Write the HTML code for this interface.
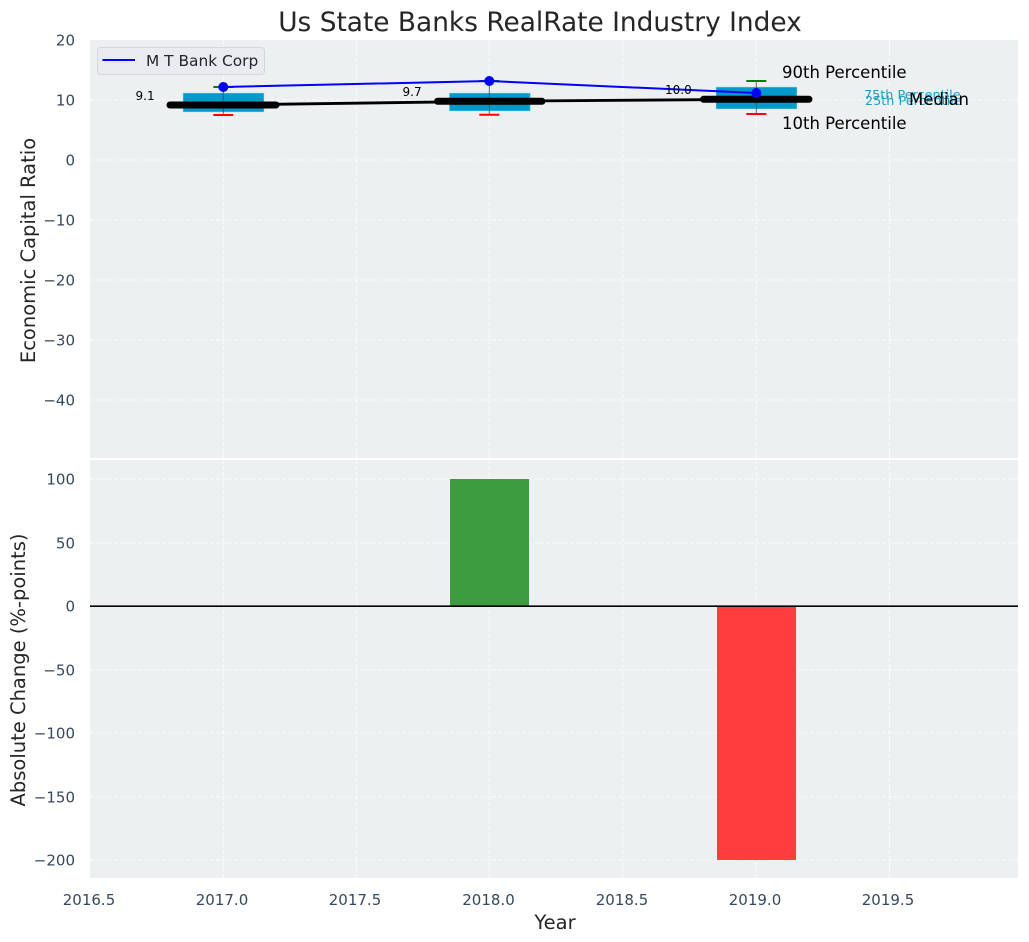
<!DOCTYPE html>
<html><head><meta charset="utf-8"><style>
html,body{margin:0;padding:0;background:#fff;width:1029px;height:942px;overflow:hidden}
svg{display:block}
text{font-family:"DejaVu Sans","Liberation Sans",sans-serif}
.t{font-size:15px;fill:#34495e}
.g{stroke:#fff;stroke-width:1;stroke-dasharray:4 2;opacity:.75;fill:none}
.l{font-size:19.500px;fill:#262626}
.p{font-size:16.500px;fill:#000}
.v{font-size:12px;fill:#000}
</style></head><body>
<svg width="1029" height="942" viewBox="0 0 1029 942" xmlns="http://www.w3.org/2000/svg">
<rect x="90" y="40" width="928" height="418" fill="#ecf0f1"/>
<rect x="90" y="460" width="928" height="418" fill="#ecf0f1"/>
<!-- grid top -->
<path class="g" d="M223.3 40V458M356.5 40V458M489.3 40V458M622.8 40V458M756.3 40V458M889.5 40V458M90 100H1018M90 160H1018M90 220H1018M90 280H1018M90 340H1018M90 400H1018"/>
<!-- grid bottom -->
<path class="g" d="M223.3 460V878M356.5 460V878M489.3 460V878M622.8 460V878M756.3 460V878M889.5 460V878M90 479H1018M90 543H1018M90 606H1018M90 670H1018M90 733H1018M90 797H1018M90 860H1018"/>
<!-- boxes -->
<g fill="#009bcb" stroke="#b5e0ef" stroke-width="1" stroke-opacity=".5">
<rect x="183" y="93" width="81" height="19"/>
<rect x="449.3" y="93" width="81" height="18"/>
<rect x="716" y="87" width="81" height="22"/>
</g>
<path d="M223.3 87V115M489.3 81V115M756.3 81V114" stroke="#34495e" stroke-width="1" fill="none" opacity=".8"/>
<path d="M213.3 87H233.3M479.3 81H499.3M746.3 81H766.3" stroke="#008000" stroke-width="2" fill="none"/>
<path d="M213.3 115H233.3M479.3 114.7H499.3M746.3 114H766.3" stroke="#ff0000" stroke-width="2" fill="none"/>
<!-- median -->
<path d="M223.3 105L489.3 101.3L756.3 99.3" stroke="#000" stroke-width="2.800" fill="none"/>
<path d="M170 105H276M437.500 101.300H542M703.500 99.300H809" stroke="#000" stroke-width="7" stroke-linecap="round" fill="none"/>
<!-- blue -->
<path d="M223.3 87L489.3 81L756.3 93" stroke="#0000ff" stroke-width="2" fill="none"/>
<circle cx="223.3" cy="87" r="5" fill="#0000ff"/>
<circle cx="489.3" cy="81" r="5" fill="#0000ff"/>
<circle cx="756.3" cy="93" r="5" fill="#0000ff"/>
<!-- value labels -->
<text class="v" x="135.5" y="100">9.1</text>
<text class="v" x="402.5" y="96">9.7</text>
<text class="v" x="665" y="94">10.0</text>
<!-- percentile labels -->
<text class="p" x="782" y="78">90th Percentile</text>
<text class="p" x="782" y="129">10th Percentile</text>
<text x="864" y="99" font-size="12.800" fill="#1a9fd0">75th Percentile</text>
<text x="865" y="105" font-size="12.800" fill="#1a9fd0">25th Percentile</text>
<text class="p" x="909" y="105">Median</text>
<!-- legend -->
<rect x="97.5" y="47.5" width="167" height="27" rx="3" fill="#e9ebf0" stroke="#d5d7da"/>
<path d="M102.5 60H135" stroke="#0000ff" stroke-width="2"/>
<text x="146" y="66" font-size="15.400" fill="#262626">M T Bank Corp</text>
<!-- bars -->
<rect x="450" y="479" width="79" height="127" fill="#3d9c3f"/>
<rect x="717" y="606" width="79" height="254" fill="#ff3d3d"/>
<rect x="90" y="605.400" width="928" height="1.600" fill="#000"/>
<!-- y ticks -->
<g class="t" text-anchor="end">
<text x="75" y="45.500">20</text>
<text x="75" y="105.500">10</text>
<text x="75" y="165.500">0</text>
<text x="75" y="225.500">−10</text>
<text x="75" y="285.500">−20</text>
<text x="75" y="345.500">−30</text>
<text x="75" y="405.500">−40</text>
<text x="75" y="484.500">100</text>
<text x="75" y="548.500">50</text>
<text x="75" y="611.500">0</text>
<text x="75" y="675.500">−50</text>
<text x="75" y="738.500">−100</text>
<text x="75" y="802.500">−150</text>
<text x="75" y="865.500">−200</text>
</g>
<g class="t" text-anchor="middle">
<text x="89" y="905">2016.5</text>
<text x="222" y="905">2017.0</text>
<text x="355" y="905">2017.5</text>
<text x="488.500" y="905">2018.0</text>
<text x="622" y="905">2018.5</text>
<text x="755" y="905">2019.0</text>
<text x="888" y="905">2019.5</text>
</g>
<text x="540" y="31" text-anchor="middle" font-size="26.400" fill="#262626">Us State Banks RealRate Industry Index</text>
<text class="l" x="555" y="929" text-anchor="middle">Year</text>
<text class="l" transform="translate(35,250.500) rotate(-90)" text-anchor="middle">Economic Capital Ratio</text>
<text class="l" transform="translate(25,670) rotate(-90)" text-anchor="middle">Absolute Change (%-points)</text>
</svg>
</body></html>
